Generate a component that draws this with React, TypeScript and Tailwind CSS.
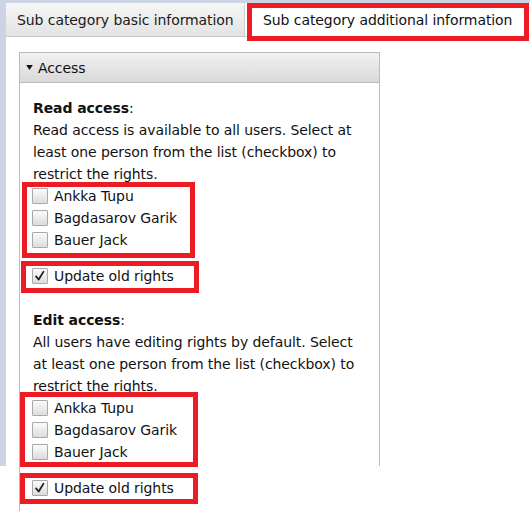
import React from "react";

const people = ["Ankka Tupu", "Bagdasarov Garik", "Bauer Jack"];

function Checkbox({ checked = false }: { checked?: boolean }) {
  return (
    <span className="flex h-4 w-4 shrink-0 items-center justify-center rounded-[1px] border border-[#a9a9a9] bg-gradient-to-b from-[#fbfbfb] to-[#dcdcdc]">
      {checked && (
        <svg viewBox="0 0 16 16" className="h-[14px] w-[14px]" aria-hidden>
          <path d="M3.5 8.5 L6.5 12 L12 3" fill="none" stroke="#1e1e1e" strokeWidth="2" strokeLinecap="round" strokeLinejoin="round" />
        </svg>
      )}
    </span>
  );
}

function CheckRow({ label, checked }: { label: string; checked?: boolean }) {
  return (
    <label className="flex h-[22px] items-center gap-[6px] -ml-px">
      <Checkbox checked={checked} />
      <span>{label}</span>
    </label>
  );
}

// red annotation frame drawn over the content
function Mark({ className }: { className: string }) {
  return <span className={`pointer-events-none absolute border-[5px] border-[#ed1c24] ${className}`} />;
}

function PeopleList({ frame }: { frame: string }) {
  return (
    <div className="relative">
      {people.map((p) => (
        <CheckRow key={p} label={p} />
      ))}
      <Mark className={frame} />
    </div>
  );
}

export default function App() {
  return (
    <div className="flex h-[511px] w-[530px] flex-col overflow-hidden bg-white font-['DejaVu_Sans',sans-serif] text-[14px] leading-[22px] tracking-[-0.08px] text-[#111]">
      <div className="flex h-[466px] shrink-0 flex-col bg-[#ccd4e4] pl-[6px] pt-[3px]">
        <div className="flex flex-1 flex-col bg-white">
          {/* tabs */}
          <div className="flex h-[34px] shrink-0 items-stretch border-b border-[#c8c8c8]">
            <div className="flex w-[239px] items-center border-r border-[#cfcfcf] bg-gradient-to-b from-[#f6f6f6] to-[#e3e3e3] pl-[11px] text-[#1a1a1a]">
              Sub category basic information
            </div>
            <div className="relative ml-[6px] -mb-px flex w-[274px] items-center bg-white pl-[12px]">
              Sub category additional information
              <Mark className="-left-[4px] -right-[4px] top-0 -bottom-[4px]" />
            </div>
          </div>

          {/* panel */}
          <div className="ml-[13px] mt-[15px] flex w-[361px] flex-1 flex-col">
            <div className="flex h-[31px] shrink-0 items-center gap-[5px] border border-[#bcbcbc] bg-gradient-to-b from-[#f1f1f1] to-[#d9d9d9] pl-[6px]">
              <svg viewBox="0 0 8 6" className="h-[5px] w-[7px]" aria-hidden>
                <polygon points="0,0 8,0 4,6" fill="#111" />
              </svg>
              <span>Access</span>
            </div>
            <div className="flex-1 border-x border-[#bcbcbc] pl-[13px] pt-[14px]">
              <p>
                <b>Read access</b>:
                <br />
                Read access is available to all users. Select at
                <br />
                least one person from the list (checkbox) to
                <br />
                restrict the rights.
              </p>
              <PeopleList frame="-left-[11px] w-[173px] -top-[3px] -bottom-[7px]" />
              <div className="relative mt-[14px]">
                <CheckRow label="Update old rights" checked />
                <Mark className="-left-[12px] w-[178px] -top-[4px] -bottom-[6px]" />
              </div>

              <p className="mt-[22px]">
                <b>Edit access</b>:
                <br />
                All users have editing rights by default. Select
                <br />
                at least one person from the list (checkbox) to
                <br />
                restrict the rights.
              </p>
              <PeopleList frame="-left-[13px] w-[178px] -top-[5px] -bottom-[4px]" />
            </div>
          </div>
        </div>
      </div>

      <div className="flex-1 pl-[6px]">
        <div className="ml-[13px] h-full border-l border-[#bcbcbc] pl-[13px] pt-[11px]">
          <div className="relative">
            <CheckRow label="Update old rights" checked />
            <Mark className="-left-[13px] w-[178px] -top-[4px] -bottom-[5px]" />
          </div>
        </div>
      </div>
    </div>
  );
}
